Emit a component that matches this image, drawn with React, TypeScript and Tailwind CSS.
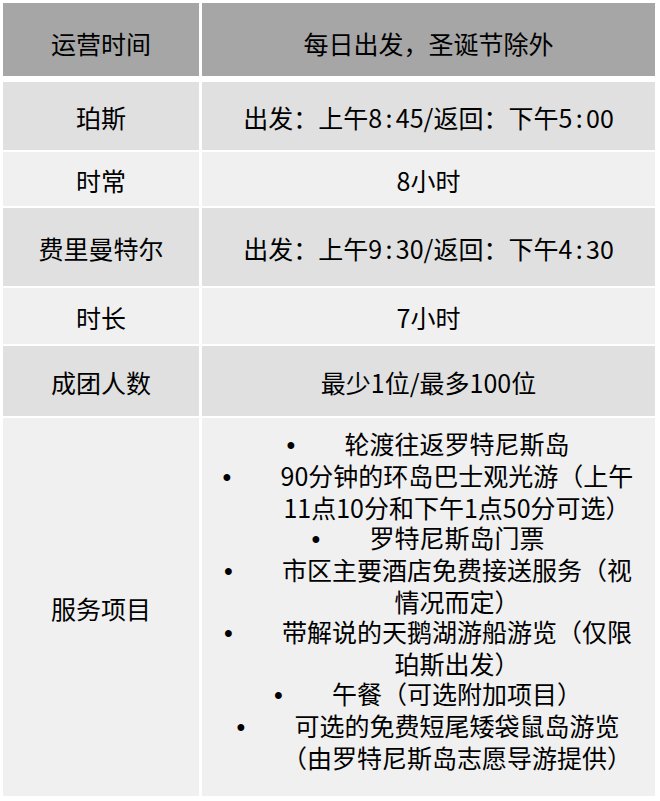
import React from "react";

type Row = { label: string; value: string; bg: string; h: string };

const rows: Row[] = [
  { label: "珀斯", value: "出发：上午8:45/返回：下午5:00", bg: "bg-[#e0e0e0]", h: "h-[68px]" },
  { label: "时常", value: "8小时", bg: "bg-[#f0f0f0]", h: "h-[54px]" },
  { label: "费里曼特尔", value: "出发：上午9:30/返回：下午4:30", bg: "bg-[#e0e0e0]", h: "h-[78px]" },
  { label: "时长", value: "7小时", bg: "bg-[#f0f0f0]", h: "h-[56px]" },
  { label: "成团人数", value: "最少1位/最多100位", bg: "bg-[#e0e0e0]", h: "h-[70px]" },
];

const services = [
  "轮渡往返罗特尼斯岛",
  "90分钟的环岛巴士观光游（上午11点10分和下午1点50分可选）",
  "罗特尼斯岛门票",
  "市区主要酒店免费接送服务（视情况而定）",
  "带解说的天鹅湖游船游览（仅限珀斯出发）",
  "午餐（可选附加项目）",
  "可选的免费短尾矮袋鼠岛游览（由罗特尼斯岛志愿导游提供）",
];

function Txt({ s }: { s: string }) {
  const parts = s.split(":");
  return (
    <>
      {parts.map((p, i) => (
        <React.Fragment key={i}>
          {p}
          {i < parts.length - 1 && <span className="inline-block w-[0.55em] text-center">:</span>}
        </React.Fragment>
      ))}
    </>
  );
}

export default function App() {
  return (
    <div className="min-h-screen bg-white pl-[3px] pt-[3px] text-[25px] text-black font-['Noto_Sans_CJK_SC',sans-serif]">
      <div className="flex w-[652px] flex-col gap-[2px]">
        <div className="mb-[4px] flex h-[73px] gap-[3px]">
          <div className="flex w-[196px] items-center justify-center bg-[#a6a6a6] pt-[8px]">运营时间</div>
          <div className="flex w-[453px] items-center justify-center bg-[#a6a6a6] pt-[8px]">每日出发，圣诞节除外</div>
        </div>
        {rows.map((r) => (
          <div key={r.label} className={`flex gap-[3px] ${r.h}`}>
            <div className={`flex w-[196px] items-center justify-center pt-[4px] ${r.bg}`}>{r.label}</div>
            <div className={`flex w-[453px] items-center justify-center pt-[4px] ${r.bg}`}>
              <Txt s={r.value} />
            </div>
          </div>
        ))}
        <div className="flex h-[378px] gap-[3px]">
          <div className="flex w-[196px] items-center justify-center bg-[#f0f0f0] pt-[4px]">服务项目</div>
          <div className="w-[453px] bg-[#f0f0f0] pl-[19px] pr-[20px] pt-[10px]">
            <ul className="leading-[30px]">
              {services.map((s) => (
                <li key={s} className="pl-[58px] -indent-[58px] text-center">
                  <span className="inline-block w-[58px] indent-0 text-left font-['Liberation_Sans',sans-serif]">•</span>
                  {s}
                </li>
              ))}
            </ul>
          </div>
        </div>
      </div>
    </div>
  );
}
